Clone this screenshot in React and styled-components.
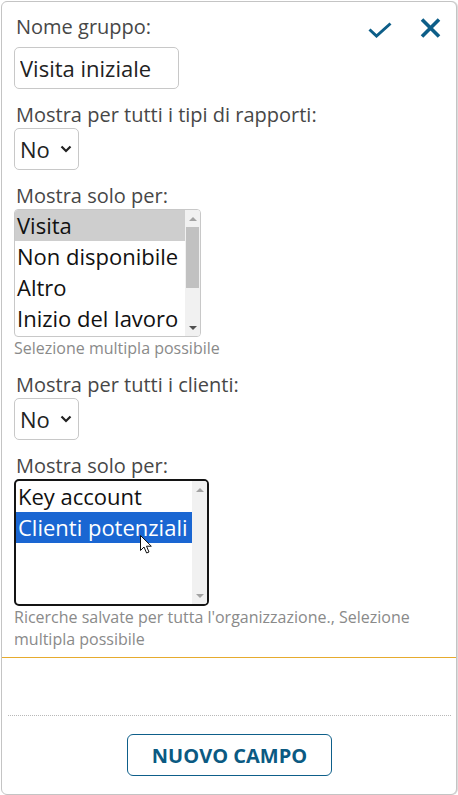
import React from "react";
import styled, { createGlobalStyle, css } from "styled-components";

const Global = createGlobalStyle`
  html, body { margin: 0; padding: 0; background: #fff; }
  body { font-family: "Open Sans", "Noto Sans", sans-serif; }
  * { box-sizing: border-box; }
`;

const Frame = styled.div`
  margin: 1px 0 0 1px;
  width: 456px;
  height: 794px;
  border: 1px solid #c4c4c4;
  border-radius: 6px;
  box-shadow: 1px 0 0 #dcdcdc;
  display: flex;
  flex-direction: column;
  background: #fff;
  overflow: hidden;
`;

const Form = styled.div`
  padding: 0 15px 7px 12px;
  border-bottom: 1px solid #e6ab2e;
  display: flex;
  flex-direction: column;
`;

const Header = styled.div`
  display: flex;
  align-items: flex-start;
  padding: 11px 0 7px;
`;

const Label = styled.div`
  font-size: 20px;
  line-height: 27px;
  color: #474747;
  white-space: nowrap;
  padding-left: 2px;
`;

const Icons = styled.div`
  margin-left: auto;
  display: flex;
  align-items: flex-start;
  gap: 28px;
`;

const IconButton = styled.button`
  border: 0;
  background: none;
  padding: 0;
  margin-top: ${(p) => p.$dy}px;
  display: block;
  cursor: pointer;
  svg { display: block; }
`;

const Group = styled.div`
  margin-top: 12px;
  display: flex;
  flex-direction: column;
  align-items: flex-start;
`;

const TextInput = styled.input`
  width: 165px;
  height: 42px;
  border: 1px solid #c8c8c8;
  border-radius: 5px;
  padding: 0 5px;
  font-family: inherit;
  font-size: 22px;
  color: #222;
  outline: none;
`;

const SelectWrap = styled.div`
  position: relative;
  width: 65px;
  height: 42px;
`;

const NativeSelect = styled.select`
  appearance: none;
  -webkit-appearance: none;
  width: 100%;
  height: 100%;
  border: 1px solid #c8c8c8;
  border-radius: 5px;
  background: #fff;
  padding: 0 0 0 5px;
  font-family: inherit;
  font-size: 22px;
  color: #222;
  outline: none;
`;

const Chevron = styled.svg`
  position: absolute;
  right: 7px;
  top: 17px;
  pointer-events: none;
`;

const ListBox = styled.div`
  position: relative;
  display: flex;
  width: ${(p) => p.$w}px;
  height: ${(p) => p.$h}px;
  border-radius: ${(p) => (p.$focused ? 5 : 4)}px;
  overflow: hidden;
  ${(p) =>
    p.$focused
      ? css`border: 2px solid #141414;`
      : css`border: 1px solid #c8c8c8;`}
`;

const Options = styled.div`
  flex: 1;
  min-width: 0;
  overflow: hidden;
`;

const Option = styled.div`
  font-size: 22px;
  line-height: 30px;
  padding: 0 2px 1px;
  white-space: nowrap;
  color: ${(p) => (p.$sel === "focus" ? "#fff" : "#111")};
  background: ${(p) =>
    p.$sel === "focus" ? "#1a66d2" : p.$sel === "blur" ? "#cecece" : "transparent"};
`;

const Scrollbar = styled.div`
  width: 15px;
  flex: none;
  background: #f1f1f1;
  display: flex;
  flex-direction: column;
  align-items: center;
`;

const Arrow = styled.div`
  height: 17px;
  width: 15px;
  flex: none;
  display: flex;
  align-items: center;
  justify-content: center;
  margin-top: ${(p) => (p.$down ? "auto" : "0")};
  &::before {
    content: "";
    width: 0;
    height: 0;
    border-left: 4px solid transparent;
    border-right: 4px solid transparent;
    ${(p) =>
      p.$down
        ? css`border-top: 4px solid ${p.$dark ? "#505050" : "#a3a3a3"};`
        : css`border-bottom: 4px solid ${p.$dark ? "#505050" : "#a3a3a3"};`}
  }
`;

const Thumb = styled.div`
  width: 13px;
  height: ${(p) => p.$h}px;
  background: #c1c1c1;
  flex: none;
`;

const Cursor = styled.svg`
  position: absolute;
  left: 123px;
  top: 53px;
  pointer-events: none;
`;

const Help = styled.div`
  font-size: 16px;
  line-height: 22px;
  color: #8a8a8a;
`;

const Spacer = styled.div`
  flex: 1;
`;

const Footer = styled.div`
  margin: 0 5px 0 6px;
  border-top: 1px dotted #b8b8b8;
  padding: 18px 0;
  display: flex;
  justify-content: center;
`;

const NewFieldButton = styled.button`
  width: 205px;
  height: 42px;
  border: 1px solid #0e5f8a;
  border-radius: 6px;
  background: #fff;
  color: #0b5a82;
  font-family: inherit;
  font-size: 20px;
  font-weight: 700;
  cursor: pointer;
  padding: 0;
`;

function List({ w, h, options, selected, focused, thumb, cursor }) {
  return (
    <ListBox $w={w} $h={h} $focused={focused}>
      <Options>
        {options.map((o) => (
          <Option key={o} $sel={o === selected ? (focused ? "focus" : "blur") : undefined}>
            {o}
          </Option>
        ))}
      </Options>
      <Scrollbar>
        <Arrow />
        {thumb ? <Thumb $h={thumb} /> : null}
        <Arrow $down $dark={!!thumb} />
      </Scrollbar>
      {cursor ? (
        <Cursor width="14" height="21" viewBox="0 0 14 21">
          <path
            d="M1.5 1.5 L1.5 16.5 L5 13 L7.6 19 L10 18 L7.5 12.2 L12.3 12.2 Z"
            fill="#fff"
            stroke="#111"
            strokeWidth="1"
            strokeLinejoin="miter"
          />
        </Cursor>
      ) : null}
    </ListBox>
  );
}

function YesNo() {
  return (
    <SelectWrap>
      <NativeSelect defaultValue="no">
        <option value="no">No</option>
        <option value="si">Sì</option>
      </NativeSelect>
      <Chevron width="12" height="8" viewBox="0 0 12 8">
        <path d="M1.5 1.5 L6 6 L10.5 1.5" fill="none" stroke="#222" strokeWidth="2.2" />
      </Chevron>
    </SelectWrap>
  );
}

export default function App() {
  return (
    <>
      <Global />
      <Frame>
        <Form>
          <Header>
            <Label>Nome gruppo:</Label>
            <Icons>
              <IconButton $dy={9} aria-label="Conferma">
                <svg width="24" height="16" viewBox="0 0 24 16">
                  <path d="M1.5 7.5 L8.5 14 L22.5 1.5" fill="none" stroke="#0d5e88" strokeWidth="3" />
                </svg>
              </IconButton>
              <IconButton $dy={5} aria-label="Chiudi">
                <svg width="21" height="20" viewBox="0 0 21 20">
                  <path d="M2 1.5 L19 18.5 M19 1.5 L2 18.5" fill="none" stroke="#0d5e88" strokeWidth="3.6" />
                </svg>
              </IconButton>
            </Icons>
          </Header>
          <TextInput defaultValue="Visita iniziale" />

          <Group>
            <Label>Mostra per tutti i tipi di rapporti:</Label>
            <YesNo />
          </Group>

          <Group>
            <Label>Mostra solo per:</Label>
            <List
              w={187}
              h={128}
              options={["Visita", "Non disponibile", "Altro", "Inizio del lavoro"]}
              selected="Visita"
              thumb={61}
            />
            <Help>Selezione multipla possibile</Help>
          </Group>

          <Group>
            <Label>Mostra per tutti i clienti:</Label>
            <YesNo />
          </Group>

          <Group>
            <Label>Mostra solo per:</Label>
            <List
              w={195}
              h={127}
              options={["Key account", "Clienti potenziali"]}
              selected="Clienti potenziali"
              focused
              cursor
            />
            <Help>Ricerche salvate per tutta l'organizzazione., Selezione multipla possibile</Help>
          </Group>
        </Form>
        <Spacer />
        <Footer>
          <NewFieldButton>NUOVO CAMPO</NewFieldButton>
        </Footer>
      </Frame>
    </>
  );
}
